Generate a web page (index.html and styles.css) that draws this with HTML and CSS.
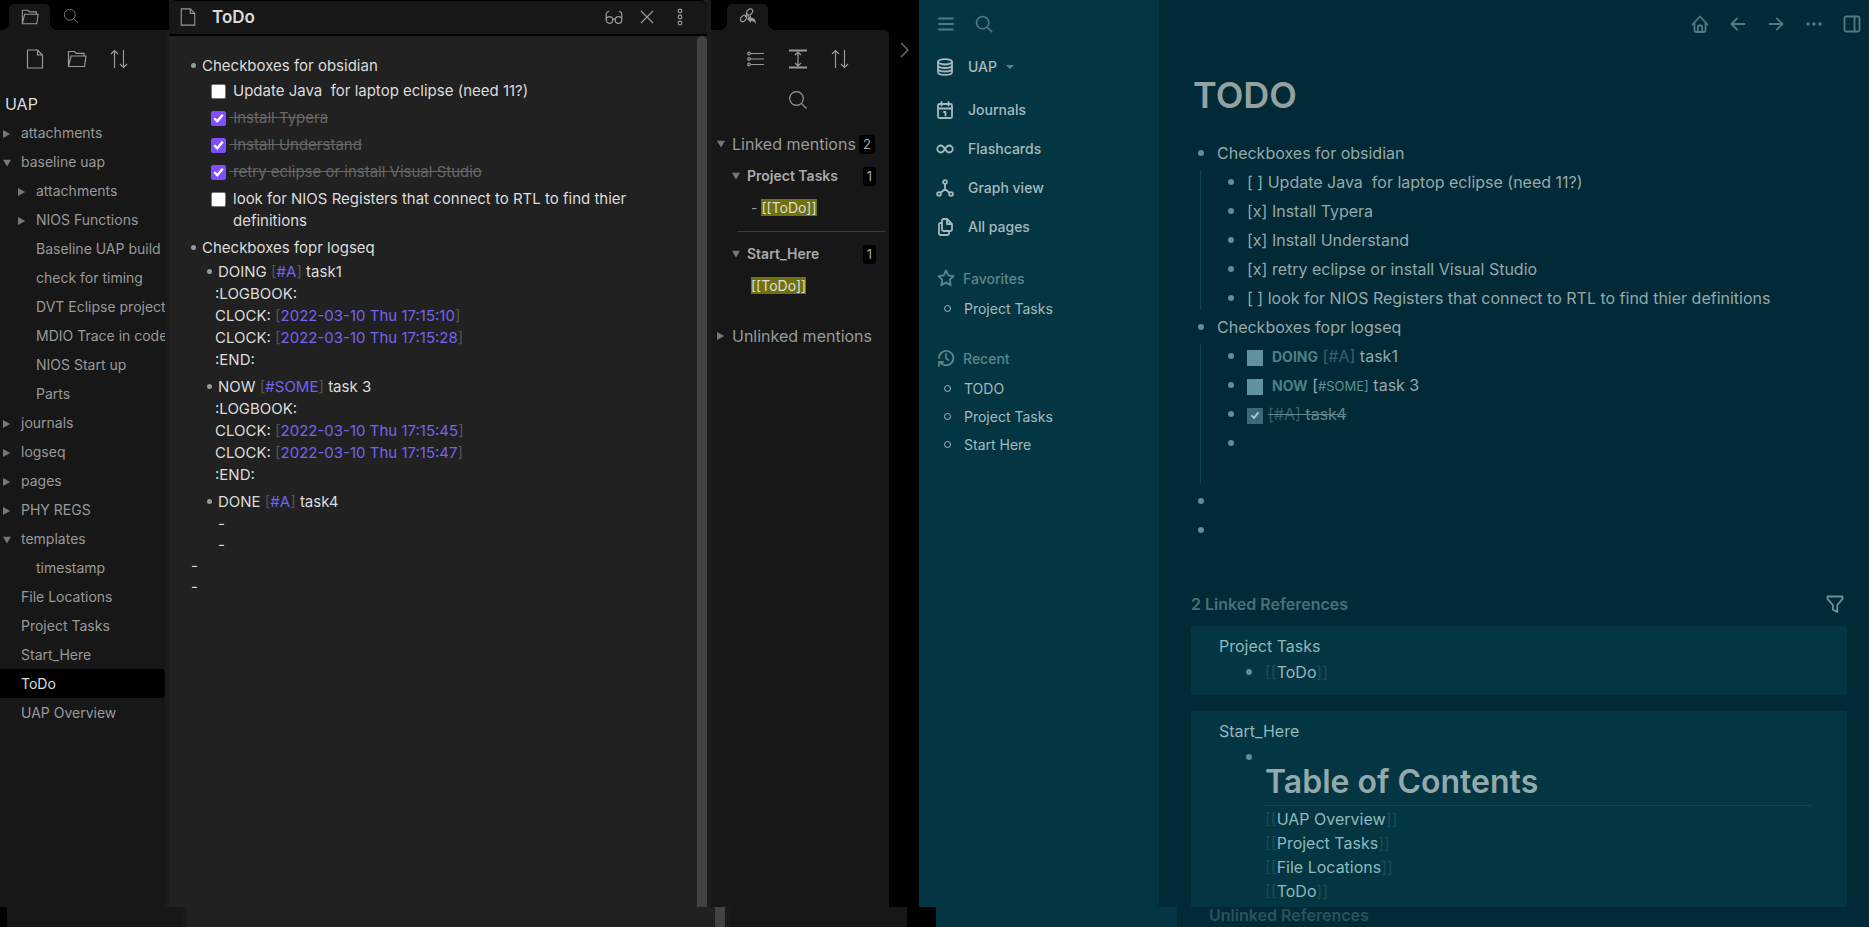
FILE: index.html
```html
<!DOCTYPE html>
<html lang="en">
<head>
<meta charset="utf-8">
<title>ToDo</title>
<link rel="stylesheet" href="styles.css">
</head>
<body>
<svg class="defs" aria-hidden="true">
  <symbol id="folder" viewBox="0 0 20 20"><path d="M1.5 17.5V2.5h6l1.500 1.800h8v2.700M1.500 17.500l2.500-10.500h15l-1.500 10.500z"/></symbol>
  <symbol id="file" viewBox="0 0 20 20"><path d="M2.500 1h10l5 5v13h-15zM12.500 1v5h5"/></symbol>
  <symbol id="sort" viewBox="0 0 20 20"><path d="M5.500 19V1.500M2 5l3.500-3.500L9 5M14.500 1v17.500M11 15l3.500 3.500L18 15"/></symbol>
  <symbol id="lens" viewBox="0 0 20 20"><circle cx="8.500" cy="8.500" r="6.800"/><path d="M13.300 13.300l5.200 5.200"/></symbol>
</svg>

<div class="apps">
  <section class="obsidian" aria-label="Obsidian">
    <aside class="files">
      <div class="tabs">
        <button class="tab" aria-label="Files"><svg class="ic18"><use href="#folder"/></svg></button>
        <button class="plain" aria-label="Search"><svg class="ic16 dim"><use href="#lens"/></svg></button>
      </div>
      <div class="tools">
        <button aria-label="New note"><svg class="ic20"><use href="#file"/></svg></button>
        <button aria-label="New folder"><svg class="ic20"><use href="#folder"/></svg></button>
        <button aria-label="Sort"><svg class="ic20"><use href="#sort"/></svg></button>
      </div>
      <h2 class="vault">UAP</h2>
      <nav class="tree">
        <button class="shut">attachments</button>
        <button class="open">baseline uap</button>
        <button class="sub shut">attachments</button>
        <button class="sub shut">NIOS Functions</button>
        <button class="sub">Baseline UAP build</button>
        <button class="sub">check for timing</button>
        <button class="sub">DVT Eclipse project</button>
        <button class="sub">MDIO Trace in code</button>
        <button class="sub">NIOS Start up</button>
        <button class="sub">Parts</button>
        <button class="shut">journals</button>
        <button class="shut">logseq</button>
        <button class="shut">pages</button>
        <button class="shut">PHY REGS</button>
        <button class="open">templates</button>
        <button class="sub">timestamp</button>
        <button>File Locations</button>
        <button>Project Tasks</button>
        <button>Start_Here</button>
        <button class="active">ToDo</button>
        <button>UAP Overview</button>
      </nav>
    </aside>

    <main class="editor">
      <header class="note-head">
        <svg class="ic18"><use href="#file"/></svg>
        <h1>ToDo</h1>
        <button aria-label="Reading view"><svg class="ic18" viewBox="0 0 18 18"><circle cx="4.500" cy="12" r="3.300"/><circle cx="13.500" cy="12" r="3.300"/><path d="M7.800 11.500q1.200-1.200 2.400 0M1.200 11.500V7q0-3.500 3-3.500M16.800 11.500V7q0-3.500-3-3.500"/></svg></button>
        <button aria-label="Close"><svg class="ic18" viewBox="0 0 18 18"><path d="M3 3l12 12M15 3L3 15"/></svg></button>
        <button aria-label="More"><svg class="ic18" viewBox="0 0 18 18"><circle cx="9" cy="3" r="1.800"/><circle cx="9" cy="9" r="1.800"/><circle cx="9" cy="15" r="1.800"/></svg></button>
      </header>
      <div class="note">
        <div class="text">
          <p class="item">Checkboxes for obsidian</p>
          <ul class="tasks">
            <li><input type="checkbox" id="t1"><label for="t1">Update Java&nbsp; for laptop eclipse (need 11?)</label></li>
            <li><input type="checkbox" id="t2" checked><label for="t2">Install Typera</label></li>
            <li><input type="checkbox" id="t3" checked><label for="t3">Install Understand</label></li>
            <li><input type="checkbox" id="t4" checked><label for="t4">retry eclipse or install Visual Studio</label></li>
            <li><input type="checkbox" id="t5"><label for="t5">look for NIOS Registers that connect to RTL to find thier definitions</label></li>
          </ul>
          <p class="item">Checkboxes fopr logseq</p>
          <div class="blocks">
            <p class="item">DOING <i>[</i><a href="#a">#A</a><i>]</i> task1</p>
            <p class="log">:LOGBOOK:<br>CLOCK: <i>[</i><a href="#c1">2022-03-10 Thu 17:15:10</a><i>]</i><br>CLOCK: <i>[</i><a href="#c2">2022-03-10 Thu 17:15:28</a><i>]</i><br>:END:</p>
            <p class="item">NOW <i>[</i><a href="#some">#SOME</a><i>]</i> task 3</p>
            <p class="log">:LOGBOOK:<br>CLOCK: <i>[</i><a href="#c3">2022-03-10 Thu 17:15:45</a><i>]</i><br>CLOCK: <i>[</i><a href="#c4">2022-03-10 Thu 17:15:47</a><i>]</i><br>:END:</p>
            <p class="item">DONE <i>[</i><a href="#a">#A</a><i>]</i> task4</p>
            <p class="dash">-<br>-</p>
          </div>
          <p class="dash outer">-<br>-</p>
        </div>
        <div class="scroll"></div>
      </div>
    </main>

    <aside class="links">
      <div class="tabs">
        <button class="tab" aria-label="Backlinks"><svg class="ic18" viewBox="0 0 18 18"><ellipse cx="10.500" cy="4" rx="2.500" ry="3.600" transform="rotate(45 10.500 4)"/><ellipse cx="4.500" cy="10.500" rx="2.500" ry="3.600" transform="rotate(45 4.500 10.500)"/><path d="M6 9l3-3.500M8.500 8.500c2 0 2.500 1.500 1.500 3"/><path class="solid" d="M8 11l4-3.500v2.200c3 0 5 2 5 6.300-1-2-2.500-3-5-3v2z"/></svg></button>
      </div>
      <div class="pane">
        <div class="tools">
          <button aria-label="Collapse results"><svg class="ic20" viewBox="0 0 20 20"><circle cx="3" cy="4.500" r="1.300"/><circle cx="3" cy="10" r="1.300"/><circle cx="3" cy="15.500" r="1.300"/><path d="M4.500 4.500H18M4.500 10H18M4.500 15.500H18"/></svg></button>
          <button aria-label="Show more context"><svg class="ic20" viewBox="0 0 20 20"><path d="M10 3v14M7 6l3-3 3 3M7 14l3 3 3-3"/><path d="M1 1.500h18M1 18.500h18" stroke-width="2"/></svg></button>
          <button aria-label="Sort"><svg class="ic20"><use href="#sort"/></svg></button>
          <button aria-label="Filter"><svg class="ic20"><use href="#lens"/></svg></button>
        </div>
        <h3 class="group open">Linked mentions<span class="badge">2</span></h3>
        <h4 class="file open">Project Tasks<span class="badge">1</span></h4>
        <p class="match ruled">- <mark>[[ToDo]]</mark></p>
        <h4 class="file open">Start_Here<span class="badge">1</span></h4>
        <p class="match"><mark>[[ToDo]]</mark></p>
        <h3 class="group shut">Unlinked mentions</h3>
      </div>
    </aside>
    <div class="rail"><button aria-label="Collapse"><svg class="ic16" viewBox="0 0 16 16"><path d="M4 1l7 7-7 7"/></svg></button></div>
  </section>

  <section class="logseq" aria-label="Logseq">
    <aside class="menu">
      <div class="menu-top">
        <button aria-label="Menu"><svg class="lg" viewBox="0 0 18 18"><path d="M2 3.500h14M2 9h14M2 14.500h14"/></svg></button>
        <button aria-label="Search"><svg class="lg"><use href="#lens"/></svg></button>
      </div>
      <nav class="main-nav">
        <button class="graph"><svg class="lg" viewBox="0 0 18 18"><ellipse cx="9" cy="3.800" rx="7" ry="2.700"/><path d="M2 3.800v10.400c0 3.600 14 3.600 14 0V3.800M2 7.300c0 3.600 14 3.600 14 0M2 10.800c0 3.600 14 3.600 14 0"/></svg>UAP<span class="caret"></span></button>
        <a href="#journals"><svg class="lg" viewBox="0 0 18 18"><rect x="2" y="3" width="14" height="14" rx="1.500"/><path d="M2 7.500h14M5.500 1v3.500M12.500 1v3.500M8 11h1.500v3.500"/></svg>Journals</a>
        <a href="#flashcards"><svg class="lg" viewBox="0 0 18 18"><path d="M9 9C7.500 6.500 6.500 5.500 4.800 5.500a3.500 3.500 0 0 0 0 7C6.500 12.500 7.500 11.500 9 9s2.500-3.500 4.200-3.500a3.500 3.500 0 0 1 0 7C11.500 12.500 10.500 11.500 9 9z"/></svg>Flashcards</a>
        <a href="#graph"><svg class="lg" viewBox="0 0 18 18"><circle cx="9" cy="3" r="1.900"/><circle cx="3" cy="15" r="1.900"/><circle cx="15" cy="15" r="1.900"/><path d="M9 5v5M4.500 13.800L9 10l4.500 3.800"/></svg>Graph view</a>
        <a href="#pages"><svg class="lg" viewBox="0 0 18 18"><path d="M11 1H7.500A1.500 1.500 0 0 0 6 2.500v9A1.500 1.500 0 0 0 7.500 13h7a1.500 1.500 0 0 0 1.500-1.500V6zM11 1v5h5M13 13v2.500a1.500 1.500 0 0 1-1.500 1.500h-7A1.500 1.500 0 0 1 3 15.500V6.500A1.500 1.500 0 0 1 4.500 5H6"/></svg>All pages</a>
      </nav>
      <h3><svg class="lg" viewBox="0 0 18 18"><path d="M9 1.500l2.300 4.900 5.300.7-3.900 3.700 1 5.300L9 13.500l-4.700 2.600 1-5.300L1.400 7.100l5.300-.7z"/></svg>Favorites</h3>
      <ul><li><a href="#pt">Project Tasks</a></li></ul>
      <h3><svg class="lg" viewBox="0 0 18 18"><path d="M3.500 13.500A7.200 7.200 0 1 0 2 9M2 17v-4h4M9 5v4.500l2.500 1.500"/></svg>Recent</h3>
      <ul><li><a href="#todo">TODO</a></li><li><a href="#pt">Project Tasks</a></li><li><a href="#sh">Start Here</a></li></ul>
    </aside>

    <main class="page">
      <div class="topbar">
        <button aria-label="Home"><svg class="lg" viewBox="0 0 18 18"><path d="M1.500 9.500L9 1.500l7.500 8M3.500 8v7.500A1.500 1.500 0 0 0 5 17h8a1.500 1.500 0 0 0 1.500-1.500V8M6.800 17v-5a1.500 1.500 0 0 1 1.500-1.500h1.400a1.500 1.500 0 0 1 1.500 1.500v5"/></svg></button>
        <button aria-label="Back"><svg class="lg" viewBox="0 0 18 18"><path d="M15.500 9h-13M8 3.500L2.500 9 8 14.500"/></svg></button>
        <button aria-label="Forward"><svg class="lg" viewBox="0 0 18 18"><path d="M2.500 9h13M10 3.500L15.500 9 10 14.500"/></svg></button>
        <button aria-label="More"><svg class="lg" viewBox="0 0 18 18"><g class="solid"><circle cx="3" cy="9" r="1.800"/><circle cx="9" cy="9" r="1.800"/><circle cx="15" cy="9" r="1.800"/></g></svg></button>
        <button aria-label="Sidebar"><svg class="lg" viewBox="0 0 18 18"><rect x="1.500" y="1.500" width="15" height="15" rx="1.500"/><path d="M11.500 1.500v15"/></svg></button>
      </div>
      <h1>TODO</h1>
      <ul class="outline">
        <li><p>Checkboxes for obsidian</p>
          <ul>
            <li><p>[ ] Update Java&nbsp; for laptop eclipse (need 11?)</p></li>
            <li><p>[x] Install Typera</p></li>
            <li><p>[x] Install Understand</p></li>
            <li><p>[x] retry eclipse or install Visual Studio</p></li>
            <li><p>[ ] look for NIOS Registers that connect to RTL to find thier definitions</p></li>
          </ul>
        </li>
        <li><p>Checkboxes fopr logseq</p>
          <ul class="roomy">
            <li><p><input type="checkbox" aria-label="task1"><b>DOING</b> <a class="faint" href="#a">[#A]</a> task1</p></li>
            <li><p><input type="checkbox" aria-label="task 3"><b>NOW</b> [<a class="tag" href="#some">#SOME]</a> task 3</p></li>
            <li><p class="done"><input type="checkbox" aria-label="task4" checked><s><a class="faint" href="#a">[#A]</a> task4</s></p></li>
            <li><p></p></li>
          </ul>
        </li>
        <li><p></p></li>
        <li><p></p></li>
      </ul>
      <div class="refs-head"><h2>2 Linked References</h2><button aria-label="Filter"><svg class="lg" viewBox="0 0 18 18"><path d="M1.500 1.500h15v2.300L11.300 10v7L6.800 14.500V10L1.500 3.800z"/></svg></button></div>
      <article class="card">
        <h3>Project Tasks</h3>
        <div class="ref"><p><i>[[</i><a href="#todo">ToDo</a><i>]]</i></p></div>
      </article>
      <article class="card">
        <h3>Start_Here</h3>
        <div class="ref">
          <h2>Table of Contents</h2>
          <p><i>[[</i><a href="#uo">UAP Overview</a><i>]]</i></p>
          <p><i>[[</i><a href="#pt">Project Tasks</a><i>]]</i></p>
          <p><i>[[</i><a href="#fl">File Locations</a><i>]]</i></p>
          <p><i>[[</i><a href="#todo">ToDo</a><i>]]</i></p>
        </div>
      </article>
    </main>
  </section>
</div>

<footer class="strip">
  <div class="strip-obsidian"><span class="s-edge"></span><span class="s-files"></span><span class="s-editor"></span><span class="s-bar"></span><span class="s-links"></span><span class="s-rail"></span></div>
  <div class="strip-logseq"><span class="s-menu"></span><h2>Unlinked References</h2></div>
</footer>
</body>
</html>
```

FILE: styles.css
```css
* { box-sizing: border-box; margin: 0; padding: 0; }
body {
  height: 100vh;
  display: flex;
  flex-direction: column;
  overflow: hidden;
  background: #000;
  font-family: Inter, "Liberation Sans", sans-serif;
  font-size: 14px;
}
button { background: none; border: 0; font: inherit; color: inherit; text-align: left; }
button svg, header svg { display: block; }
a { color: inherit; text-decoration: none; }
ul { list-style: none; }
i { font-style: normal; }
svg { flex: none; fill: none; stroke: currentColor; stroke-width: 1.2; overflow: visible; }
.defs { position: absolute; width: 0; height: 0; }
.solid { fill: currentColor; stroke: none; }
.ic16 { width: 16px; height: 16px; }
.ic18 { width: 18px; height: 18px; }
.ic20 { width: 20px; height: 20px; }
.lg { width: 18px; height: 18px; stroke-width: 1.8; stroke-linecap: round; stroke-linejoin: round; }

.apps { flex: 1; min-height: 0; display: flex; }
.obsidian { flex: 919 1 0; min-width: 0; display: flex; color: #999; }
.logseq { flex: 950 1 0; min-width: 0; display: flex; background: #012a36; }

/* Obsidian: side panes */
.files { width: 169px; background: #171717; border-right: 4px solid #1b1b1b; }
.tabs { height: 30px; display: flex; align-items: flex-end; background: #000; margin-right: -4px; }
.files .tabs { padding-left: 9px; }
.links .tabs { padding-left: 16px; margin: 0; }
.tab {
  position: relative;
  width: 41px; height: 26px;
  display: grid; place-items: center;
  background: #171717;
  border-radius: 5px 5px 0 0;
}
.tab::before, .tab::after {
  content: "";
  position: absolute;
  bottom: 0;
  width: 8px; height: 8px;
}
.tab::before { right: 100%; background: radial-gradient(circle at 0 0, #000 8px, #171717 8px); }
.tab::after { left: 100%; background: radial-gradient(circle at 100% 0, #000 8px, #171717 8px); }
.plain { padding: 6px 13px; }
.dim { color: #777; }
.tools { display: flex; gap: 22px; padding: 19px 0 0 25px; }
.vault { padding: 23px 5px 2px; font-size: 16px; line-height: 24px; font-weight: 400; color: #dcdcdc; }
.tree { display: flex; flex-direction: column; }
.tree button { height: 29px; padding-left: 21px; line-height: 29px; white-space: nowrap; overflow: hidden; border-radius: 0 4px 4px 0; }
.tree .sub { padding-left: 36px; }
.tree .active { background: #000; color: #dcdcdc; }
.shut::before, .open::before {
  content: "";
  display: inline-block;
  width: 8px; height: 8px;
  margin-left: -18px; margin-right: 10px;
  background: #777;
}
.shut::before { clip-path: polygon(0 0, 90% 50%, 0 100%); }
.open::before { clip-path: polygon(0 10%, 100% 10%, 50% 95%); }

/* Obsidian: editor */
.editor { flex: 1; min-width: 0; display: flex; flex-direction: column; background: #212121; color: #dcdcdc; }
.note-head {
  height: 36px;
  display: flex; align-items: center; gap: 15px;
  padding: 0 18px 2px 10px;
  background: #171717;
  border-top: 1px solid #000; border-bottom: 2px solid #000;
  border-radius: 6px 6px 0 0;
  color: #999;
}
.note-head h1 { flex: 1; font-size: 17px; line-height: 24px; font-weight: 600; color: #dcdcdc; }
.note { flex: 1; min-height: 0; display: flex; }
.text { flex: 1; min-width: 0; padding: 19px 24px 0 33px; font-size: 15px; line-height: 22px; }
.scroll { width: 10px; background: #424242; border-radius: 5px 5px 0 0; }
.item::before {
  content: "";
  display: inline-block;
  width: 5px; height: 5px;
  margin: 0 6px 3px -11px;
  border-radius: 50%;
  background: #999;
}
.text > .item { padding-bottom: 3px; }
.tasks { padding-left: 9px; }
.tasks li { display: flex; align-items: flex-start; gap: 3px; padding-bottom: 5px; }
.tasks input {
  appearance: none;
  flex: none;
  display: grid; place-items: center;
  width: 15px; height: 15px;
  margin-top: 4px;
  border: 1px solid #777; border-radius: 2px;
  background: #fff;
}
.tasks label { padding-left: 4px; }
.tasks input:checked { background: #7f4fff; border-color: #7f4fff; }
.tasks :checked::after, .done :checked::after {
  content: "";
  width: 11px; height: 11px;
  background: #fff;
  clip-path: polygon(4% 55%, 18% 40%, 38% 60%, 80% 8%, 97% 22%, 40% 90%);
}
.tasks input:checked + label { color: #666; text-decoration: line-through; }
.tasks input:checked + label::before { content: "\00a0"; margin-left: -4px; }
.blocks { padding-left: 16px; }
.text > .item:nth-of-type(n+2) { padding-bottom: 2px; }
.text i { color: #555; }
.text a { color: #7464ee; }
.log { padding: 0 0 5px; margin-left: -3px; }
.dash { line-height: 21px; }
.dash.outer { margin-left: -11px; }

/* Obsidian: backlinks */
.links { width: 182px; display: flex; flex-direction: column; border-left: 4px solid #1b1b1b; background: #000; }
.pane { flex: 1; background: #171717; border-radius: 0 5px 0 0; }
.links .tools { flex-wrap: wrap; justify-content: center; gap: 21px 22px; padding: 19px 32px 20px 28px; }
.group { display: flex; align-items: center; padding: 0 14px 0 21px; font-size: 16px; line-height: 28px; font-weight: 400; white-space: nowrap; }
.file { display: flex; align-items: center; padding: 0 13px 0 36px; margin-top: 4px; font-size: 14px; line-height: 28px; font-weight: 600; color: #aaa; }
.pane .open::before, .pane .shut::before { margin-left: -15px; margin-right: 7px; }
.badge { margin-left: auto; padding: 0 4px; border-radius: 3px; background: #000; color: #aaa; font-size: 13px; line-height: 19px; font-weight: 400; }
.match { margin-left: 26px; margin-right: 4px; padding: 6px 0 11px 14px; line-height: 24px; }
.ruled { border-bottom: 1px solid #3a3a3a; margin-bottom: 8px; }
.match:not(.ruled) { padding-bottom: 24px; }
mark { background: #71700f; color: #dcdcdc; }
.rail { width: 30px; background: #000; padding: 42px 8px; color: #777; }

/* Logseq: menu */
.menu { width: 240px; background: #033642; color: #a6b9bc; border-right: 4px solid #03333f; }
.menu-top { display: flex; gap: 20px; padding: 15px 18px 0; color: #4a7c84; }
.main-nav { display: flex; flex-direction: column; padding: 14px 17px 0; }
.main-nav > * { display: flex; align-items: center; gap: 14px; height: 39px; font-weight: 500; }
.main-nav .graph { margin-bottom: 4px; }
.caret { border: 4px solid transparent; border-top-color: #5c8189; border-bottom: 0; margin-left: -5px; }
.menu h3 { display: flex; align-items: center; gap: 8px; padding-left: 18px; margin-top: 21px; height: 30px; font-size: 14px; font-weight: 500; color: #5d858c; }
.menu .main-nav + h3 { margin-top: 17px; }
.menu li { display: flex; align-items: center; gap: 13px; height: 28px; padding-left: 25px; }
.menu ul { padding-top: 1px; }
.menu li::before { content: ""; width: 5px; height: 5px; border: 1px solid #a6b9bc; border-radius: 50%; }

/* Logseq: page */
.page { flex: 1; min-width: 0; overflow: hidden; padding: 0 22px 0 32px; color: #93a9ab; font-size: 16px; line-height: 24px; }
.topbar { display: flex; justify-content: flex-end; gap: 20px; padding-top: 15px; margin-right: -14px; color: #4f7b82; }
.page h1 { padding: 38px 0 0 2px; font-size: 36px; line-height: 48px; font-weight: 600; color: #93a1a1; }
.outline { padding-top: 22px; }
.outline p { position: relative; height: 24px; margin-bottom: 5px; padding-left: 26px; }
.outline p::before, .ref::before {
  content: "";
  position: absolute;
  left: 7px; top: 9px;
  width: 6px; height: 6px;
  border-radius: 50%;
  background: #608f97;
}
.outline li > ul { margin-left: 9px; padding-left: 20px; border-left: 1px solid #0f444e; }
.outline ul li:last-child p { margin-bottom: 0; }
.outline > li { margin-bottom: 5px; }
.outline .roomy { padding-bottom: 29px; }
.outline input {
  appearance: none;
  display: inline-grid; place-items: center;
  width: 16px; height: 16px;
  margin-right: 9px;
  vertical-align: middle;
  background: #5f929d;
}
.outline b { font-size: 14px; line-height: 16px; font-weight: 700; color: #4b8088; }
.faint { color: #37626a; }
.tag { font-size: 13px; line-height: 16px; color: #5b9296; }
.outline .done { color: #63868c; }
.outline .done input { margin-right: 5px; background: #396b77; }
.done :checked::after { width: 9px; height: 9px; background: #b5c7c9; }
.refs-head { display: flex; justify-content: space-between; align-items: center; padding: 45px 3px 10px 0; color: #6f9298; }
.refs-head h2, .strip h2 { font-size: 16px; line-height: 24px; font-weight: 600; color: #4b6f77; }
.card { margin-bottom: 16px; padding: 8px 36px 11px 28px; border-radius: 3px; background: #033642; color: #8fb8bb; }
.card h3 { font-size: 16px; font-weight: 400; margin-bottom: 2px; }
.ref { position: relative; margin-left: 20px; padding-left: 26px; }
.ref i { color: #1d4b56; }
.ref h2 { padding-top: 14px; margin-bottom: 1px; font-size: 32px; line-height: 46px; font-weight: 600; color: #93a9ab; border-bottom: 1px solid #104653; }

/* Bottom strip */
.strip { height: 20px; display: flex; overflow: hidden; }
.strip-obsidian { flex: 936 1 0; min-width: 0; display: flex; }
.strip-logseq { flex: 933 1 0; min-width: 0; display: flex; background: #012a36; }
.s-edge { width: 7px; }
.s-files { width: 180px; background: #171717; border-right: 4px solid #1b1b1b; }
.s-editor { flex: 1; background: #212121; }
.s-bar { width: 10px; background: #424242; }
.s-links { width: 182px; background: #171717; border-left: 4px solid #1b1b1b; }
.s-rail { width: 29px; }
.s-menu { width: 241px; background: #033642; }
.strip h2 { padding-left: 32px; line-height: 16px; color: #2c525c; }
```
